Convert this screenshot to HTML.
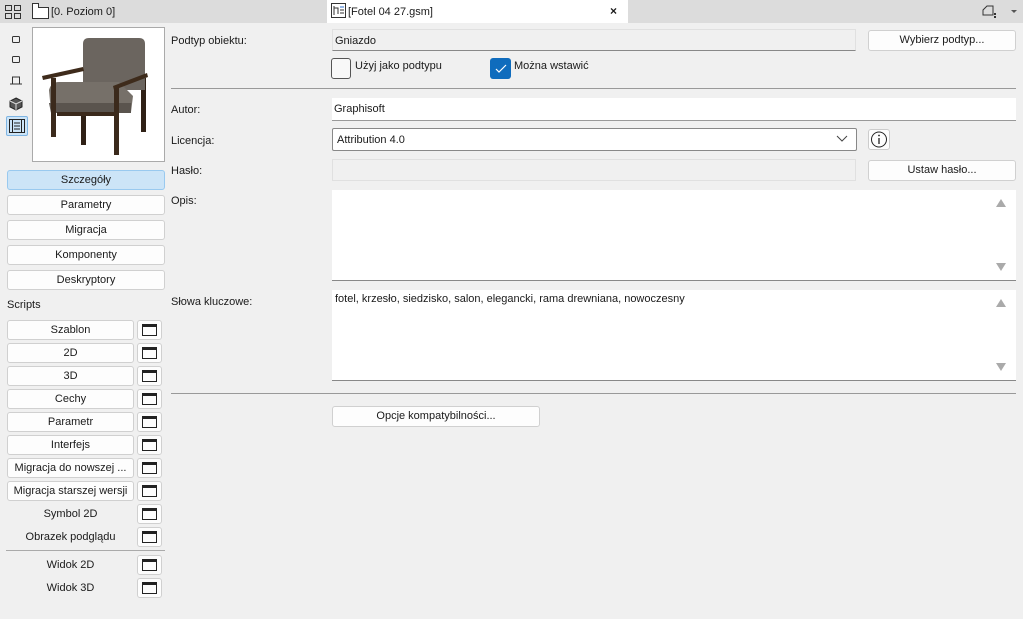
<!DOCTYPE html>
<html><head><meta charset="utf-8"><style>
*{box-sizing:border-box;margin:0;padding:0}
body{width:1023px;height:619px;background:#f0f0f0;font-family:"Liberation Sans",sans-serif;font-size:11px;color:#1a1a1a;position:relative;overflow:hidden}
.a{position:absolute}
.btn{position:absolute;background:#fdfdfd;border:1px solid #d0d0d0;border-radius:3px;text-align:center;line-height:18px;font-size:11px}
.ib{position:absolute;width:25px;height:20px;background:#fdfdfd;border:1px solid #d0d0d0;border-radius:3px}
.ib:after{content:"";position:absolute;left:4px;top:3px;width:15px;height:12px;border:1px solid #222;border-top-width:3px;box-sizing:border-box}
.lbl{position:absolute;left:171px;font-size:11px}
.field{position:absolute;border-bottom:1px solid #999}
.sc{position:absolute;right:9px;width:0;height:0;border-left:5px solid transparent;border-right:5px solid transparent}
</style></head><body>
<div class="a" style="left:0;top:0;width:1023px;height:23px;background:#dcdcdc"></div>
<svg class="a" style="left:5px;top:5px" width="16" height="14"><rect x="0.5" y="0.5" width="6" height="5" fill="none" stroke="#333"/><rect x="9.5" y="0.5" width="6" height="5" fill="none" stroke="#333"/><rect x="0.5" y="8.5" width="6" height="5" fill="none" stroke="#333"/><rect x="9.5" y="8.5" width="6" height="5" fill="none" stroke="#333"/></svg>
<svg class="a" style="left:32px;top:3px" width="18" height="16"><path d="M0.5 0.5h6v4h10v11h-16z" fill="#fff" stroke="#333"/></svg>
<div class="a" style="left:51px;top:6px;font-size:11px">[0. Poziom 0]</div>
<div class="a" style="left:327px;top:0;width:301px;height:23px;background:#fff"></div>
<svg class="a" style="left:331px;top:3px" width="15" height="15"><rect x="0.5" y="0.5" width="14" height="14" fill="#fff" stroke="#333"/><path d="M3 3v9M3 5h4v6M9 4h4M9 7h4M9 10h4" stroke="#333" fill="none"/><path d="M9 4h4" stroke="#2a6fd0"/></svg>
<div class="a" style="left:348px;top:6px">[Fotel 04 27.gsm]</div>
<div class="a" style="left:610px;top:4px;font-size:12px;font-weight:bold">×</div>
<svg class="a" style="left:982px;top:5px" width="36" height="14"><path d="M1 10V5l4-4h6v9z" fill="none" stroke="#333"/><rect x="12" y="8" width="2" height="2" fill="#333"/><rect x="12" y="11" width="2" height="2" fill="#333"/><path d="M29 5l3 3 3-3z" fill="#555"/></svg>

<svg class="a" style="left:9px;top:33px" width="20" height="100">
<rect x="3.5" y="3.5" width="7" height="6" rx="1" fill="none" stroke="#333"/>
<rect x="3.5" y="23.5" width="7" height="6" rx="1" fill="none" stroke="#333"/>
<path d="M3.5 51v-7h7v7M1 51h12" fill="none" stroke="#333"/>
<path d="M7 65l6 3v6l-6 3-6-3v-6z" fill="#555" stroke="#222"/><path d="M1 68l6 3 6-3M7 71v6" stroke="#ddd" fill="none"/>
</svg>
<div class="a" style="left:6px;top:116px;width:22px;height:20px;background:#cce4f7;border:1px solid #7fb5e3;border-radius:2px"></div>
<svg class="a" style="left:9px;top:119px" width="16" height="14"><rect x="0.5" y="0.5" width="15" height="13" fill="none" stroke="#222"/><path d="M3.5 0v14M12.5 0v14M5 4h6M5 7h6M5 10h6" stroke="#222"/></svg>

<div class="a" style="left:32px;top:27px;width:133px;height:135px;background:#fff;border:1px solid #aaa"></div>
<svg class="a" style="left:33px;top:28px" width="131" height="133">
<rect x="48" y="62" width="5" height="55" fill="#2f2116"/>
<rect x="108" y="50" width="5" height="54" fill="#2f2116"/>
<path d="M50 16q0-6 6-6h50q6 0 6 6v46h-62z" fill="#6b655f"/>
<path d="M16 62q2-8 10-8h60l14 14-2 16h-80z" fill="#767069"/>
<path d="M16 75h82v10h-80z" fill="#5a544e"/>
<path d="M9 48l41-9 1 4-41 9z" fill="#3e2b1b"/>
<path d="M80 58l34-13 1 4-34 13z" fill="#3e2b1b"/>
<rect x="18" y="50" width="5" height="59" fill="#3b2a1c"/>
<rect x="81" y="60" width="5" height="67" fill="#3b2a1c"/>
<rect x="24" y="84" width="60" height="4" fill="#3b2a1c"/>
</svg>

<div class="btn" style="left:7px;top:170px;width:158px;height:20px;background:#cce4f7;border-color:#99c9ef">Szczegóły</div>
<div class="btn" style="left:7px;top:195px;width:158px;height:20px">Parametry</div>
<div class="btn" style="left:7px;top:220px;width:158px;height:20px">Migracja</div>
<div class="btn" style="left:7px;top:245px;width:158px;height:20px">Komponenty</div>
<div class="btn" style="left:7px;top:270px;width:158px;height:20px">Deskryptory</div>
<div class="a" style="left:7px;top:299px">Scripts</div>

<div class="btn" style="left:7px;top:320px;width:127px;height:20px">Szablon</div><div class="ib" style="left:137px;top:320px"></div>
<div class="btn" style="left:7px;top:343px;width:127px;height:20px">2D</div><div class="ib" style="left:137px;top:343px"></div>
<div class="btn" style="left:7px;top:366px;width:127px;height:20px">3D</div><div class="ib" style="left:137px;top:366px"></div>
<div class="btn" style="left:7px;top:389px;width:127px;height:20px">Cechy</div><div class="ib" style="left:137px;top:389px"></div>
<div class="btn" style="left:7px;top:412px;width:127px;height:20px">Parametr</div><div class="ib" style="left:137px;top:412px"></div>
<div class="btn" style="left:7px;top:435px;width:127px;height:20px">Interfejs</div><div class="ib" style="left:137px;top:435px"></div>
<div class="btn" style="left:7px;top:458px;width:127px;height:20px">Migracja do nowszej ...</div><div class="ib" style="left:137px;top:458px"></div>
<div class="btn" style="left:7px;top:481px;width:127px;height:20px">Migracja starszej wersji</div><div class="ib" style="left:137px;top:481px"></div>
<div class="a" style="left:7px;top:508px;width:127px;text-align:center">Symbol 2D</div><div class="ib" style="left:137px;top:504px"></div>
<div class="a" style="left:7px;top:531px;width:127px;text-align:center">Obrazek podglądu</div><div class="ib" style="left:137px;top:527px"></div>
<div class="a" style="left:6px;top:550px;width:159px;height:1px;background:#aaa"></div>
<div class="a" style="left:7px;top:559px;width:127px;text-align:center">Widok 2D</div><div class="ib" style="left:137px;top:555px"></div>
<div class="a" style="left:7px;top:582px;width:127px;text-align:center">Widok 3D</div><div class="ib" style="left:137px;top:578px"></div>

<div class="lbl" style="top:35px">Podtyp obiektu:</div>
<div class="field" style="left:332px;top:29px;width:524px;height:22px;border:1px solid #e0e0e0;border-bottom-color:#888;padding:5px 2px">Gniazdo</div>
<div class="btn" style="left:868px;top:30px;width:148px;height:21px;line-height:19px">Wybierz podtyp...</div>
<div class="a" style="left:331px;top:58px;width:20px;height:21px;border:1px solid #555;border-radius:3px;background:#f8f8f8"></div>
<div class="a" style="left:355px;top:60px">Użyj jako podtypu</div>
<div class="a" style="left:490px;top:58px;width:21px;height:21px;border-radius:3px;background:#0f6cbd"></div>
<svg class="a" style="left:494px;top:63px" width="14" height="12"><path d="M2 6l3 3 7-7" stroke="#fff" fill="none" stroke-width="1.2"/></svg>
<div class="a" style="left:514px;top:60px">Można wstawić</div>
<div class="a" style="left:171px;top:88px;width:845px;height:1px;background:#999"></div>

<div class="lbl" style="top:104px">Autor:</div>
<div class="field" style="left:332px;top:98px;width:684px;height:23px;background:#fff;padding:5px 2px">Graphisoft</div>
<div class="lbl" style="top:135px">Licencja:</div>
<div class="a" style="left:332px;top:128px;width:525px;height:23px;background:#fff;border:1px solid #888;border-radius:2px;padding:5px 4px">Attribution 4.0</div>
<svg class="a" style="left:836px;top:135px" width="12" height="8"><path d="M1 1l5 5 5-5" stroke="#444" fill="none"/></svg>
<div class="a" style="left:868px;top:129px;width:22px;height:21px;background:#fdfdfd;border:1px solid #ccc;border-radius:3px"></div>
<svg class="a" style="left:870px;top:130px" width="18" height="19"><circle cx="9" cy="9.5" r="7.5" fill="none" stroke="#222"/><path d="M9 8v6" stroke="#222" stroke-width="1.3"/><circle cx="9" cy="5.5" r="0.9" fill="#222"/></svg>
<div class="lbl" style="top:165px">Hasło:</div>
<div class="a" style="left:332px;top:159px;width:524px;height:22px;border:1px solid #e0e0e0"></div>
<div class="btn" style="left:868px;top:160px;width:148px;height:21px;line-height:19px">Ustaw hasło...</div>

<div class="lbl" style="top:195px">Opis:</div>
<div class="a" style="left:332px;top:190px;width:684px;height:91px;background:#fff;border-bottom:1px solid #888"></div>
<div class="sc" style="top:199px;left:996px;border-bottom:8px solid #aaa"></div>
<div class="sc" style="top:263px;left:996px;border-top:8px solid #aaa"></div>
<div class="lbl" style="top:296px">Słowa kluczowe:</div>
<div class="a" style="left:332px;top:290px;width:684px;height:91px;background:#fff;border-bottom:1px solid #888;padding:3px 3px">fotel, krzesło, siedzisko, salon, elegancki, rama drewniana, nowoczesny</div>
<div class="sc" style="top:299px;left:996px;border-bottom:8px solid #aaa"></div>
<div class="sc" style="top:363px;left:996px;border-top:8px solid #aaa"></div>
<div class="a" style="left:171px;top:393px;width:845px;height:1px;background:#999"></div>
<div class="btn" style="left:332px;top:406px;width:208px;height:21px;line-height:19px">Opcje kompatybilności...</div>
</body></html>
